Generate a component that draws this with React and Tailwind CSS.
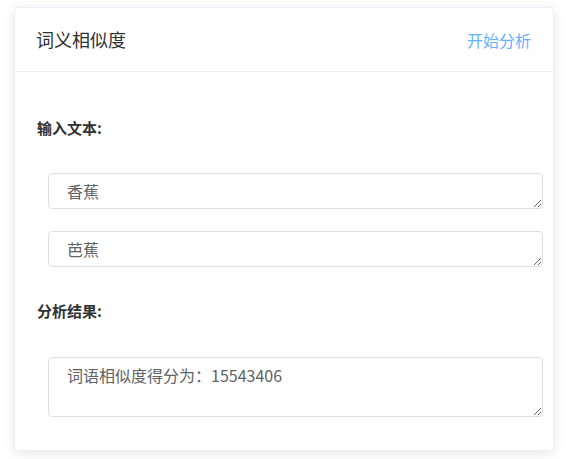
import React from 'react';

const ResultBox = ({ value, rows, className = '' }) => (
  <textarea
    readOnly
    rows={rows}
    defaultValue={value}
    className={`block w-[495px] ml-[33px] rounded-[4px] border border-[#dcdfe6] bg-white pl-[18px] pr-[15px] py-[5px] text-[16px] leading-[24px] text-[#606266] font-['Noto_Sans_CJK_SC',sans-serif] outline-none ${className}`}
  />
);

const App = () => {
  return (
    <div className="min-h-screen bg-white pt-[7px] pl-[14px] font-['Noto_Sans_CJK_SC','Noto_Sans',sans-serif]">
      <div className="w-[540px] rounded-[4px] border border-[#ebeef5] bg-white shadow-[0_2px_12px_0_rgba(0,0,0,0.1)] overflow-hidden">
        {/* Header */}
        <div className="h-[64px] flex items-center justify-between pl-[21px] pr-[22px] border-b border-[#ebeef5]">
          <span className="text-[18px] text-[#303133]">词义相似度</span>
          <button className="text-[16px] text-[#66b1ff] bg-transparent">开始分析</button>
        </div>

        {/* Body */}
        <div className="flex flex-col pt-[46px] pb-[33px]">
          <div className="pl-[22px] text-[15px] leading-[20px] font-bold text-[#303133]">输入文本:</div>
          <ResultBox value="香蕉" rows={1} className="mt-[35px]" />
          <ResultBox value="芭蕉" rows={1} className="mt-[22px]" />
          <div className="pl-[22px] mt-[34px] text-[15px] leading-[20px] font-bold text-[#303133]">分析结果:</div>
          <ResultBox value="词语相似度得分为：15543406" rows={2} className="mt-[36px]" />
        </div>
      </div>
    </div>
  );
};

export default App;
